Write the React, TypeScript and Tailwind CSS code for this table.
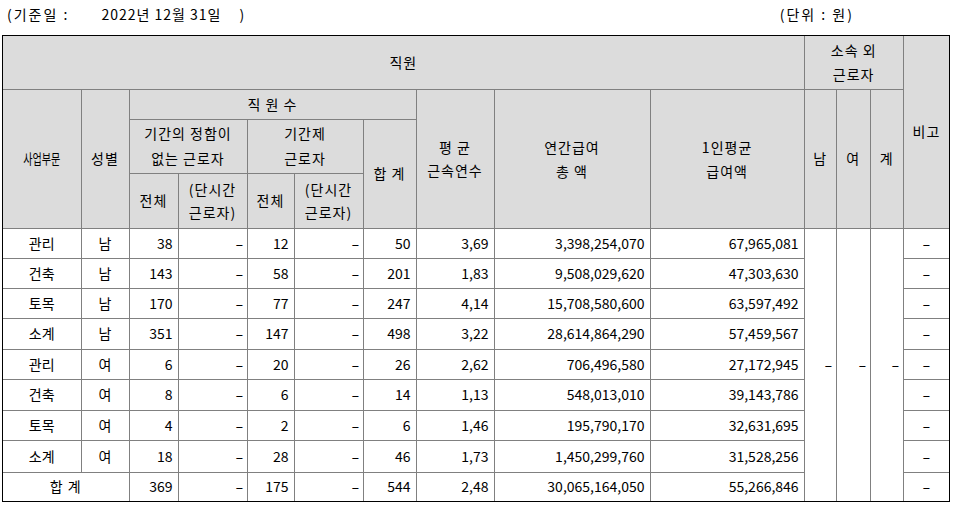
const rows = [
  ['관리', '남', '38', '-', '12', '-', '50', '3,69', '3,398,254,070', '67,965,081'],
  ['건축', '남', '143', '-', '58', '-', '201', '1,83', '9,508,029,620', '47,303,630'],
  ['토목', '남', '170', '-', '77', '-', '247', '4,14', '15,708,580,600', '63,597,492'],
  ['소계', '남', '351', '-', '147', '-', '498', '3,22', '28,614,864,290', '57,459,567'],
  ['관리', '여', '6', '-', '20', '-', '26', '2,62', '706,496,580', '27,172,945'],
  ['건축', '여', '8', '-', '6', '-', '14', '1,13', '548,013,010', '39,143,786'],
  ['토목', '여', '4', '-', '2', '-', '6', '1,46', '195,790,170', '32,631,695'],
  ['소계', '여', '18', '-', '28', '-', '46', '1,73', '1,450,299,760', '31,528,256'],
];

const rowHeights = ['h-[30px]', 'h-[30px]', 'h-[30px]', 'h-[31px]', 'h-[30px]', 'h-[31px]', 'h-[30px]', 'h-[32px]'];

const th = 'border border-[#808080] bg-[#dcdcdc] text-center align-middle font-normal p-0 tracking-[1px]';
const td = 'border border-[#808080] align-middle p-0';
const num = `${td} text-right pr-[5px]`;
const mid = `${td} text-center`;

// the source renders "-" as a wide dash, so stretch it a little
function Dash() {
  return <span className="inline-block origin-center [transform:scaleX(1.7)]">-</span>;
}

function Cell({ v }: { v: string }) {
  return <td className={num}>{v === '-' ? <Dash /> : v}</td>;
}

export default function App() {
  return (
    <div
      className="w-[955px] h-[507px] bg-white text-black text-[14px]"
      style={{ fontFamily: '"Noto Sans CJK KR", "Noto Sans", sans-serif' }}
    >
      <div className="flex h-[28px] items-center mb-[7px] leading-none tracking-[1px] whitespace-pre">
        <span className="ml-[7px] tracking-[2px]">(기준일 :</span>
        <span className="ml-[32px]">2022년 12월 31일</span>
        <span className="ml-[18px]">)</span>
        <span className="ml-auto mr-[101px] tracking-[2px]">(단위 : 원)</span>
      </div>

      <div className="ml-[2px] w-[948px] border border-black">
        <table className="w-[946px] table-fixed border-collapse border-hidden">
          <colgroup>
            <col className="w-[78px]" />
            <col className="w-[48px]" />
            <col className="w-[49px]" />
            <col className="w-[69px]" />
            <col className="w-[47px]" />
            <col className="w-[69px]" />
            <col className="w-[53px]" />
            <col className="w-[78px]" />
            <col className="w-[156px]" />
            <col className="w-[154px]" />
            <col className="w-[32px]" />
            <col className="w-[34px]" />
            <col className="w-[33px]" />
            <col className="w-[46px]" />
          </colgroup>
          <thead>
            <tr className="h-[53px]">
              <th colSpan={10} className={th}>직원</th>
              <th colSpan={3} className={`${th} leading-[24px]`}>
                소속 외<br />근로자
              </th>
              <th rowSpan={4} className={th}>비고</th>
            </tr>
            <tr className="h-[30px]">
              <th rowSpan={3} className={`${th} tracking-normal`}>
                <span className="inline-block [transform:scaleX(0.72)]">사업부문</span>
              </th>
              <th rowSpan={3} className={th}>성별</th>
              <th colSpan={5} className={th}>직 원 수</th>
              <th rowSpan={3} className={`${th} leading-[23px]`}>
                평 균<br />근속연수
              </th>
              <th rowSpan={3} className={`${th} leading-[24px]`}>
                연간급여<br />총 액
              </th>
              <th rowSpan={3} className={`${th} leading-[24px]`}>
                1인평균<br />급여액
              </th>
              <th rowSpan={3} className={th}>남</th>
              <th rowSpan={3} className={th}>여</th>
              <th rowSpan={3} className={th}>계</th>
            </tr>
            <tr className="h-[54px]">
              <th colSpan={2} className={`${th} leading-[25px]`}>
                기간의 정함이<br />없는 근로자
              </th>
              <th colSpan={2} className={`${th} leading-[25px]`}>
                기간제<br />근로자
              </th>
              <th rowSpan={2} className={th}>합 계</th>
            </tr>
            <tr className="h-[55px]">
              <th className={th}>전체</th>
              <th className={`${th} leading-[23px]`}>
                (단시간<br />근로자)
              </th>
              <th className={th}>전체</th>
              <th className={`${th} leading-[23px]`}>
                (단시간<br />근로자)
              </th>
            </tr>
          </thead>
          <tbody>
            {rows.map((r, i) => (
              <tr key={i} className={rowHeights[i]}>
                <td className={mid}>{r[0]}</td>
                <td className={mid}>{r[1]}</td>
                {r.slice(2).map((v, j) => (
                  <Cell key={j} v={v} />
                ))}
                {i === 0 && (
                  <>
                    <td rowSpan={9} className={num}><Dash /></td>
                    <td rowSpan={9} className={num}><Dash /></td>
                    <td rowSpan={9} className={num}><Dash /></td>
                  </>
                )}
                <td className={mid}><Dash /></td>
              </tr>
            ))}
            <tr className="h-[29px]">
              <td colSpan={2} className={`${mid} tracking-[1px]`}>합 계</td>
              {['369', '-', '175', '-', '544', '2,48', '30,065,164,050', '55,266,846'].map((v, j) => (
                <Cell key={j} v={v} />
              ))}
              <td className={mid}><Dash /></td>
            </tr>
          </tbody>
        </table>
      </div>
    </div>
  );
}
